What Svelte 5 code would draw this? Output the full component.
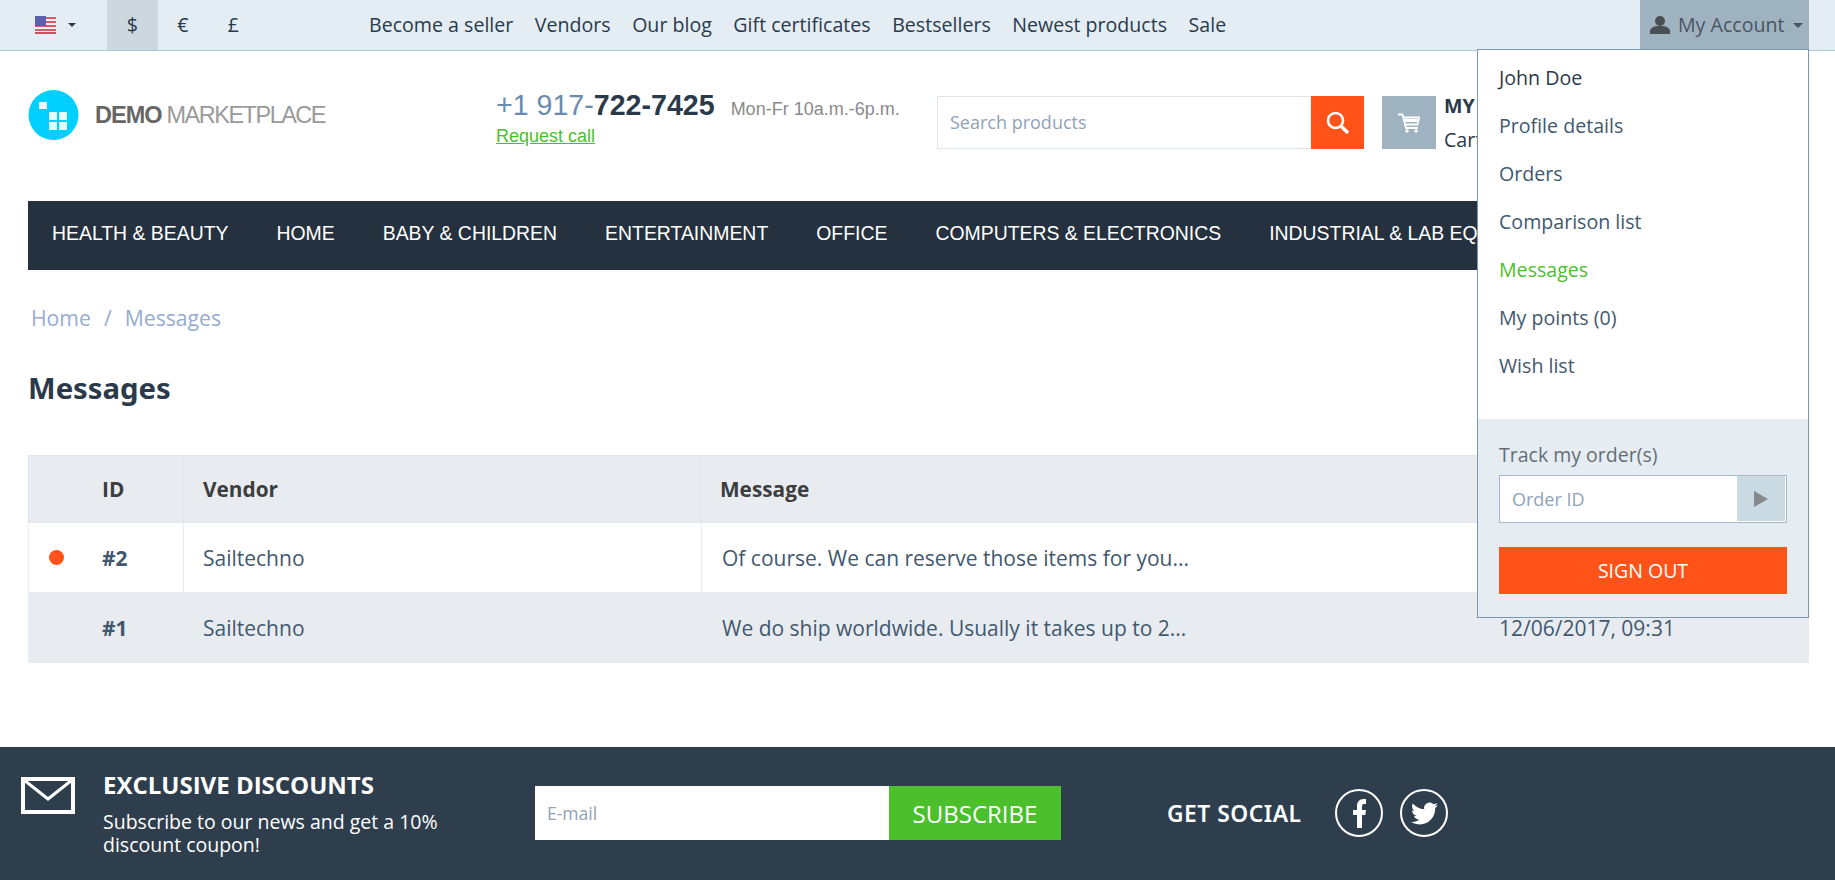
<script>
	const currencies = ['$', '€', '£'];
	const topLinks = ['Become a seller', 'Vendors', 'Our blog', 'Gift certificates', 'Bestsellers', 'Newest products', 'Sale'];
	const categories = ['Health & Beauty', 'Home', 'Baby & Children', 'Entertainment', 'Office', 'Computers & Electronics', 'Industrial & Lab Equipment'];
	const accountLinks = ['Profile details', 'Orders', 'Comparison list', 'Messages', 'My points (0)', 'Wish list'];
	const messages = [
		{ id: 2, vendor: 'Sailtechno', text: 'Of course. We can reserve those items for you...', date: '12/06/2017, 09:34', unread: true },
		{ id: 1, vendor: 'Sailtechno', text: 'We do ship worldwide. Usually it takes up to 2...', date: '12/06/2017, 09:31', unread: false }
	];
</script>

<div class="page">
	<div class="topbar">
		<div class="lang">
			<svg class="flag" width="21" height="18" viewBox="0 0 21 18">
				<rect width="21" height="18" fill="#f4f0f2" />
				<rect y="1" width="21" height="2" fill="#d9596a" />
				<rect y="5" width="21" height="2" fill="#d9596a" />
				<rect y="9" width="21" height="2" fill="#d9596a" />
				<rect y="13" width="21" height="2" fill="#d9596a" />
				<rect y="16" width="21" height="2" fill="#c9505f" />
				<rect width="11" height="10" fill="#5a5fb0" />
			</svg>
			<span class="caret dark"></span>
		</div>
		<div class="currencies">
			{#each currencies as c, i}
				<span class="currency" class:active={i === 0}>{c}</span>
			{/each}
		</div>
		<nav class="toplinks">
			{#each topLinks as link}
				<a href="#top">{link}</a>
			{/each}
		</nav>
		<div class="account">
			<svg width="20" height="18" viewBox="0 0 20 18">
				<circle cx="10" cy="5" r="5" fill="#4a4f55" />
				<path d="M0 18v-3c0-3 4-4.500 7-5h6c3 .5 7 2 7 5v3z" fill="#4a4f55" />
			</svg>
			<span class="account-label">My Account</span>
			<span class="caret"></span>

			<div class="dropdown">
				<ul>
					<li class="username">John Doe</li>
					{#each accountLinks as link}
						<li class:current={link === 'Messages'}>{link}</li>
					{/each}
				</ul>
				<div class="track">
					<div class="track-label">Track my order(s)</div>
					<div class="track-input">
						<span class="placeholder">Order ID</span>
						<span class="go"><svg width="14" height="16" viewBox="0 0 14 16"><path d="M0 0l14 8-14 8z" fill="#85898c" /></svg></span>
					</div>
					<button class="signout">SIGN OUT</button>
				</div>
			</div>
		</div>
	</div>

	<header class="head">
		<div class="logo">
			<svg width="51" height="50" viewBox="0 0 51 50">
				<circle cx="25.500" cy="25" r="25" fill="#00d0ff" />
				<rect x="11" y="12" width="8" height="7" fill="#fff" opacity=".9" />
				<rect x="21" y="22" width="8" height="8" fill="#fff" opacity=".9" />
				<rect x="31" y="22" width="8" height="8" fill="#fff" opacity=".9" />
				<rect x="21" y="32" width="8" height="8" fill="#fff" opacity=".9" />
				<rect x="31" y="32" width="8" height="8" fill="#fff" opacity=".9" />
			</svg>
			<span class="logo-text"><b>DEMO</b> MARKETPLACE</span>
		</div>
		<div class="phone">
			<div class="phone-line">
				<span class="number">+1 917-<b>722-7425</b></span>
				<span class="hours">Mon-Fr 10a.m.-6p.m.</span>
			</div>
			<a class="callback" href="#top">Request call</a>
		</div>
		<div class="search">
			<span class="search-text">Search products</span>
			<span class="search-btn">
				<svg width="23" height="23" viewBox="0 0 23 23" fill="none" stroke="#fff">
					<circle cx="9.500" cy="9.500" r="7.500" stroke-width="2.600" />
					<path d="M15 15l7 7" stroke-width="3.400" />
				</svg>
			</span>
		</div>
		<div class="cart">
			<span class="cart-icon">
				<svg width="22" height="20" viewBox="0 0 22 20" fill="none" stroke="#fff">
					<path d="M0 1.500h4.500L8 15h12" stroke-width="1.800" />
					<path d="M6 4.500h15l-1.500 7H7.500" stroke-width="1.800" />
					<path d="M6.500 7.500h13" stroke-width="3" />
					<circle cx="9" cy="18" r="1.700" fill="#fff" stroke="none" />
					<circle cx="18" cy="18" r="1.700" fill="#fff" stroke="none" />
				</svg>
			</span>
			<div class="cart-text">
				<strong>MY CART</strong>
				<span>Cart is empty</span>
			</div>
		</div>
	</header>

	<nav class="mainnav">
		{#each categories as cat}
			<a href="#top">{cat.toUpperCase()}</a>
		{/each}
	</nav>

	<div class="crumbs">
		<span>Home</span><span class="sep">/</span><span>Messages</span>
	</div>

	<h1>Messages</h1>

	<table>
		<thead>
			<tr>
				<th class="id-col">ID</th>
				<th class="vendor-col">Vendor</th>
				<th class="msg-col">Message</th>
				<th class="date-col">Date</th>
			</tr>
		</thead>
		<tbody>
			{#each messages as m}
				<tr>
					<td class="id-cell">
						{#if m.unread}<span class="dot"></span>{/if}
						<b>#{m.id}</b>
					</td>
					<td class="vendor-cell">{m.vendor}</td>
					<td class="msg-cell">{m.text}</td>
					<td class="date-cell">{m.date}</td>
				</tr>
			{/each}
		</tbody>
	</table>

	<footer>
		<svg class="mail" width="54" height="37" viewBox="0 0 54 37" fill="none" stroke="#fff">
			<rect x="2" y="2" width="50" height="33" stroke-width="4" />
			<path d="M3 3l24 19L51 3" stroke-width="3" />
		</svg>
		<div class="promo">
			<div class="promo-title">EXCLUSIVE DISCOUNTS</div>
			<p>Subscribe to our news and get a 10% discount coupon!</p>
		</div>
		<div class="subscribe">
			<span class="email">E-mail</span>
			<button>SUBSCRIBE</button>
		</div>
		<div class="social-title">GET SOCIAL</div>
		<div class="social">
			<span class="circle">
				<svg width="13" height="29" viewBox="0 0 13 29"><path d="M4 29V16H0v-5h4V7c0-4 2.500-7 6.500-7H13v5h-2c-1.500 0-2 1-2 2.500V11h4l-.7 5H9v13z" fill="#fff" /></svg>
			</span>
			<span class="circle">
				<svg width="27" height="27" viewBox="0 0 24 24"><path d="M23.953 4.570a10 10 0 01-2.825.775 4.958 4.958 0 002.163-2.723c-.951.555-2.005.959-3.127 1.184a4.920 4.920 0 00-8.384 4.482C7.690 8.095 4.067 6.130 1.640 3.162a4.822 4.822 0 00-.666 2.475c0 1.710.870 3.213 2.188 4.096a4.904 4.904 0 01-2.228-.616v.060a4.923 4.923 0 003.946 4.827 4.996 4.996 0 01-2.212.085 4.936 4.936 0 004.604 3.417 9.867 9.867 0 01-6.102 2.105c-.390 0-.779-.023-1.170-.067a13.995 13.995 0 007.557 2.209c9.053 0 13.998-7.496 13.998-13.985 0-.210 0-.420-.015-.630A9.935 9.935 0 0024 4.590z" fill="#fff" /></svg>
			</span>
		</div>
	</footer>
</div>

<style>
	:global(body) {
		margin: 0;
		background: #fff;
		overflow: hidden;
	}

	.page {
		display: flex;
		flex-direction: column;
		height: 880px;
		overflow: hidden;
		font-family: "Open Sans", "Noto Sans", sans-serif;
		font-size: 19.600px;
		color: #2b3a4a;
	}

	/* top bar */
	.topbar {
		display: flex;
		align-items: stretch;
		height: 50px;
		background: #e4edf3;
		border-bottom: 1px solid #a9c9d8;
		padding-right: 26px;
		flex-shrink: 0;
	}

	.lang {
		display: flex;
		align-items: center;
		width: 107px;
		box-sizing: border-box;
		padding-left: 35px;
		gap: 12px;
	}

	.caret {
		width: 0;
		height: 0;
		border-left: 5px solid transparent;
		border-right: 5px solid transparent;
		border-top: 5px solid #4a5560;
	}

	.caret.dark {
		border-width: 4.500px 4.500px 0;
		border-top-color: #2b3a4a;
	}

	.currencies {
		display: flex;
	}

	.currency {
		width: 50.500px;
		padding-bottom: 2px;
		box-sizing: border-box;
		display: flex;
		align-items: center;
		justify-content: center;
	}

	.currency.active {
		background: #ccd7e0;
	}

	.toplinks {
		display: flex;
		align-items: center;
		gap: 21.500px;
		margin-left: 110.500px;
		padding-bottom: 2px;
	}

	.toplinks a {
		color: #2b3a4a;
		text-decoration: none;
	}

	.account {
		position: relative;
		margin-left: auto;
		width: 169px;
		box-sizing: border-box;
		padding-left: 10px;
		display: flex;
		align-items: center;
		background: #9fb2c0;
		color: #4a5560;
	}

	.account-label {
		margin: 0 8px 0 8px;
		position: relative;
		top: -1px;
	}

	.dropdown {
		position: absolute;
		top: 49px;
		right: 0;
		width: 332px;
		box-sizing: border-box;
		background: #fff;
		border: 1px solid #7a97b0;
		z-index: 5;
	}

	.dropdown ul {
		list-style: none;
		margin: 0;
		padding: 4px 21px 0;
		height: 369px;
		box-sizing: border-box;
	}

	.dropdown li {
		height: 48px;
		line-height: 48px;
		color: #42586e;
	}

	.dropdown li.username {
		color: #2b3a4a;
	}

	.dropdown li.current {
		color: #4bbf2c;
	}

	.track {
		background: #e5edf2;
		height: 198px;
		box-sizing: border-box;
		padding: 22px 21px 0;
	}

	.track-label {
		color: #666e75;
		line-height: 25px;
		margin-bottom: 9px;
		font-size: 19.500px;
		position: relative;
		top: 1px;
	}

	.track-input {
		display: flex;
		height: 48px;
		box-sizing: border-box;
		background: #fff;
		border: 1px solid #a5b8cb;
	}

	.placeholder {
		flex: 1;
		padding-left: 12px;
		line-height: 46px;
		font-size: 18px;
		color: #8fa3b8;
	}

	.go {
		width: 48px;
		margin-bottom: 1px;
		margin-right: 1px;
		background: #cadae2;
		display: flex;
		align-items: center;
		justify-content: center;
	}

	.signout {
		display: block;
		width: 100%;
		height: 47px;
		margin-top: 24px;
		border: 0;
		background: #ff5319;
		color: #fff;
		font: inherit;
		font-size: 19.500px;
	}

	/* logo, phone, search */
	.head {
		display: flex;
		align-items: flex-start;
		height: 150px;
		padding-left: 28px;
		flex-shrink: 0;
		box-sizing: border-box;
	}

	.logo {
		display: flex;
		align-items: center;
		gap: 16px;
		width: 468px;
		margin-top: 39px;
	}

	.logo-text {
		font-family: "Liberation Sans", sans-serif;
		font-size: 23.500px;
		letter-spacing: -1.500px;
		color: #9a9a9a;
	}

	.logo-text b {
		color: #666;
		letter-spacing: -1px;
	}

	.phone {
		width: 441px;
		margin-top: 38px;
		font-family: "Liberation Sans", sans-serif;
	}

	.phone-line {
		display: flex;
		align-items: baseline;
		gap: 16px;
	}

	.number {
		font-size: 28.600px;
		color: #6b8bb0;
	}

	.number b {
		color: #2b3a4a;
	}

	.hours {
		font-size: 18px;
		color: #8a8a8a;
	}

	.callback {
		display: block;
		margin-top: 4px;
		font-size: 18px;
		color: #4bbf2c;
	}

	.search {
		display: flex;
		width: 427px;
		height: 53px;
		margin-top: 45px;
		box-sizing: border-box;
		border: 1px solid #dde4ec;
		border-right: 0;
	}

	.search-text {
		flex: 1;
		padding-left: 12px;
		line-height: 51px;
		font-size: 18px;
		color: #8fa3b8;
	}

	.search-btn {
		width: 53px;
		margin: -1px 0;
		background: #ff5319;
		display: flex;
		align-items: center;
		justify-content: center;
	}

	.cart {
		display: flex;
		margin: 45px 0 0 18px;
		gap: 8px;
	}

	.cart-icon {
		width: 54px;
		height: 53px;
		background: #9fb2c0;
		display: flex;
		align-items: center;
		justify-content: center;
	}

	.cart-text {
		display: flex;
		flex-direction: column;
		white-space: nowrap;
		line-height: 34px;
		margin-top: -7px;
	}

	/* category bar */
	.mainnav {
		display: flex;
		gap: 48px;
		height: 69px;
		align-items: center;
		margin: 0 26px 0 28px;
		padding-left: 24px;
		background: #25313e;
		overflow: hidden;
		white-space: nowrap;
		flex-shrink: 0;
	}

	.mainnav a {
		color: #fff;
		text-decoration: none;
		font-family: "Liberation Sans", sans-serif;
		font-size: 19.410px;
		position: relative;
		top: -2px;
	}

	.crumbs {
		display: flex;
		gap: 13px;
		margin: 33px 0 0 31px;
		font-size: 21.200px;
		line-height: 30px;
		color: #94add0;
	}

	h1 {
		margin: 35px 0 0 28px;
		font-family: "Noto Sans", sans-serif;
		font-size: 29.300px;
		line-height: 40px;
		font-weight: 700;
		color: #2b3a4a;
	}

	table {
		margin: 47px 26px 0 28px;
		width: 1781px;
		table-layout: fixed;
		border-collapse: collapse;
		font-size: 21px;
		color: #42586e;
		flex-shrink: 0;
	}

	th,
	td {
		text-align: left;
		padding: 0 18px;
		border: 1px solid #e8ecf0;
		font-weight: 400;
	}

	th {
		height: 66px;
		background: #e8ecf1;
		border-color: #e0e6ec;
		font-weight: 700;
		font-size: 20.800px;
		color: #3d3d3d;
	}

	td {
		height: 69px;
	}

	tbody tr:nth-child(2) td {
		background: #e8ecf1;
	}

	.id-col {
		width: 155px;
		padding-left: 73px;
		box-sizing: border-box;
	}

	.vendor-col {
		width: 518px;
		padding-left: 19px;
		box-sizing: border-box;
	}

	.msg-col {
		width: 778px;
		box-sizing: border-box;
	}

	.vendor-cell {
		padding-left: 19px;
	}

	.msg-cell {
		padding-left: 20px;
	}

	.date-cell {
		padding-left: 19px;
	}

	.id-cell {
		position: relative;
		padding-left: 73px;
	}

	.dot {
		position: absolute;
		left: 20px;
		top: 27px;
		width: 15px;
		height: 15px;
		border-radius: 50%;
		background: #ff5319;
	}

	/* footer */
	footer {
		margin-top: auto;
		height: 133px;
		background: #2f3e4d;
		color: #fff;
		display: flex;
		flex-shrink: 0;
	}

	.mail {
		margin: 30px 0 0 21px;
	}

	.promo {
		width: 345px;
		margin: 20px 0 0 28px;
	}

	.promo-title {
		font-size: 24px;
		font-weight: 700;
		line-height: 36px;
	}

	.promo p {
		margin: 7px 0 0;
		font-size: 19.500px;
		line-height: 23px;
	}

	.subscribe {
		display: flex;
		height: 54px;
		margin: 39px 0 0 87px;
	}

	.email {
		width: 354px;
		box-sizing: border-box;
		padding-left: 12px;
		background: #fff;
		color: #8fa3b8;
		line-height: 54px;
		font-size: 17.500px;
	}

	.subscribe button {
		width: 172px;
		border: 0;
		background: #4bbf2c;
		color: #fff;
		font: inherit;
		font-size: 24px;
	}

	.social-title {
		margin: 51px 0 0 106px;
		font-family: "Noto Sans", sans-serif;
		font-size: 22.800px;
		font-weight: 600;
		line-height: 32px;
		letter-spacing: .5px;
	}

	.social {
		display: flex;
		gap: 17px;
		margin: 42px 0 0 34px;
	}

	.circle {
		width: 48px;
		height: 48px;
		box-sizing: border-box;
		border: 2px solid #fff;
		border-radius: 50%;
		display: flex;
		align-items: center;
		justify-content: center;
	}
</style>
